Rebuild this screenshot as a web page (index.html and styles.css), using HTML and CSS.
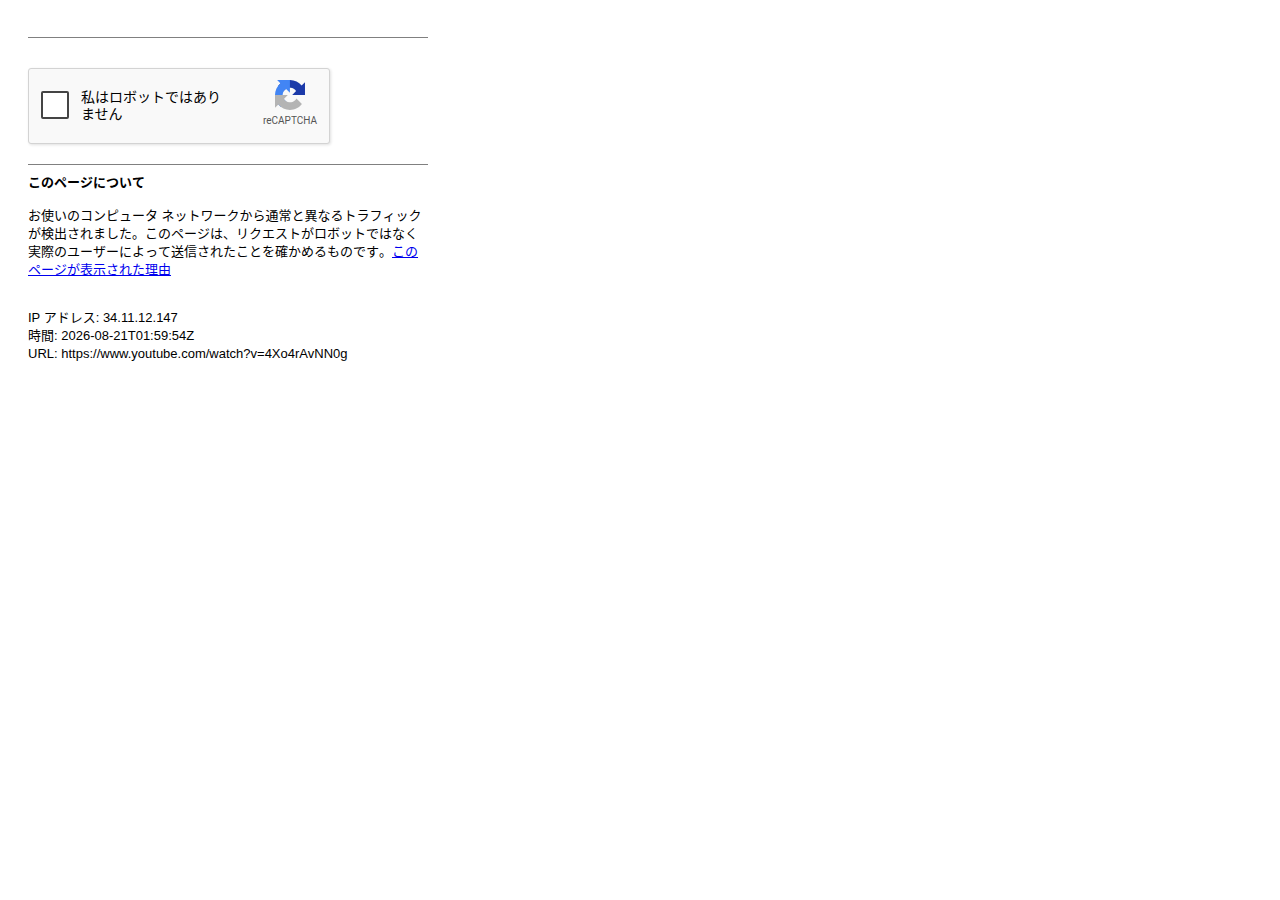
FILE: index.html
```html
<!DOCTYPE html>
<html lang="ja">
<head>
  <meta charset="UTF-8">
  <meta name="viewport" content="width=device-width, initial-scale=1">
  <title>https://www.youtube.com/watch?v=4Xo4rAvNN0g</title>
  <link rel="stylesheet" href="styles.css">
</head>
<body>

<main class="container">
  <hr class="rule">

  <form id="captcha-form" action="#" method="POST">
    <div class="captcha">
      <input type="checkbox" id="robot" class="captcha-check" name="robot">
      <label for="robot" class="captcha-label">私はロボットではありません</label>
      <div class="captcha-brand">
        <svg class="captcha-logo" viewBox="0 0 64 64" aria-hidden="true">
          <path fill="#1c3aa9" d="M64 31.955l-.033-1.37V4.687l-7.16 7.16C50.948 4.674 42.033.093 32.05.093c-10.4 0-19.622 4.96-25.458 12.64l11.736 11.86a15.55 15.55 0 0 1 4.754-5.334c2.05-1.6 4.952-2.906 8.968-2.906.485 0 .86.057 1.135.163 4.976.393 9.288 3.14 11.828 7.124l-8.307 8.307L64 31.953"/>
          <path fill="#4285f4" d="M31.862.094l-1.37.033H4.594l7.16 7.16C4.58 13.147 0 22.06 0 32.046c0 10.4 4.96 19.622 12.64 25.458L24.5 45.768a15.55 15.55 0 0 1-5.334-4.754c-1.6-2.05-2.906-4.952-2.906-8.968 0-.485.057-.86.163-1.135.393-4.976 3.14-9.288 7.124-11.828l8.307 8.307L31.86.095"/>
          <path fill="#b4b4b4" d="M.001 32.045l.033 1.37v25.898l7.16-7.16c5.86 7.173 14.774 11.754 24.76 11.754 10.4 0 19.622-4.96 25.458-12.64l-11.736-11.86a15.55 15.55 0 0 1-4.754 5.334c-2.05 1.6-4.952 2.906-8.968 2.906-.485 0-.86-.057-1.135-.163-4.976-.393-9.288-3.14-11.828-7.124l8.307-8.307c-10.522.04-22.4.066-27.295-.005"/>
        </svg>
        <span class="captcha-name">reCAPTCHA</span>
      </div>
    </div>
  </form>

  <hr class="rule">

  <h1 class="title">このページについて</h1>
  <p class="text">お使いのコンピュータ ネットワークから通常と異なるトラフィックが検出されました。このページは、リクエストがロボットではなく実際のユーザーによって送信されたことを確かめるものです。<a href="#why">このページが表示された理由</a></p>

  <p class="details">
    IP アドレス: 34.11.12.147<br>
    時間: 2026-08-21T01:59:54Z<br>
    URL: https://www.youtube.com/watch?v=4Xo4rAvNN0g
  </p>
</main>

</body>
</html>
```
FILE: styles.css
```css
* {
  box-sizing: border-box;
  margin: 0;
  padding: 0;
}

body {
  padding: 37px 28px;
  background: #fff;
  color: #000;
  font-family: "Liberation Sans", Arial, "Noto Sans CJK JP", sans-serif;
  font-size: 13px;
  line-height: 18px;
}

.container {
  max-width: 400px;
}

.rule {
  height: 1px;
  border: none;
  background: #808080;
}

/* captcha box */
.captcha {
  display: flex;
  align-items: flex-start;
  max-width: 302px;
  min-height: 76px;
  margin: 30px 0 20px;
  padding: 10px 12px;
  border: 1px solid #d3d3d3;
  border-radius: 3px;
  background: #f9f9f9;
  box-shadow: 1px 1px 3px rgba(0, 0, 0, 0.12);
}

.captcha-check {
  appearance: none;
  flex: none;
  width: 28px;
  height: 28px;
  margin-top: 12px;
  margin-right: 12px;
  border: 2px solid #444;
  border-radius: 2px;
  background: #fff;
  cursor: pointer;
}

.captcha-check:checked {
  background: #4285f4;
}

.captcha-label {
  width: 152px;
  margin-top: 10px;
  font-family: Roboto, "Noto Sans CJK JP", sans-serif;
  font-size: 14px;
  line-height: 17px;
  cursor: pointer;
}

.captcha-brand {
  display: flex;
  flex-direction: column;
  align-items: center;
  margin-left: auto;
}

.captcha-logo {
  width: 30px;
  height: 32px;
}

.captcha-name {
  margin-top: 4px;
  color: #555;
  font-family: Roboto, sans-serif;
  font-size: 10px;
  line-height: 12px;
}

/* explanation */
.title {
  margin-top: 9px;
  font-size: 13px;
  line-height: 18px;
  font-kerning: none;
}

.text {
  margin-top: 15px;
  font-kerning: none;
}

.text a {
  color: #00e;
}

.details {
  margin-top: 30px;
}
```
